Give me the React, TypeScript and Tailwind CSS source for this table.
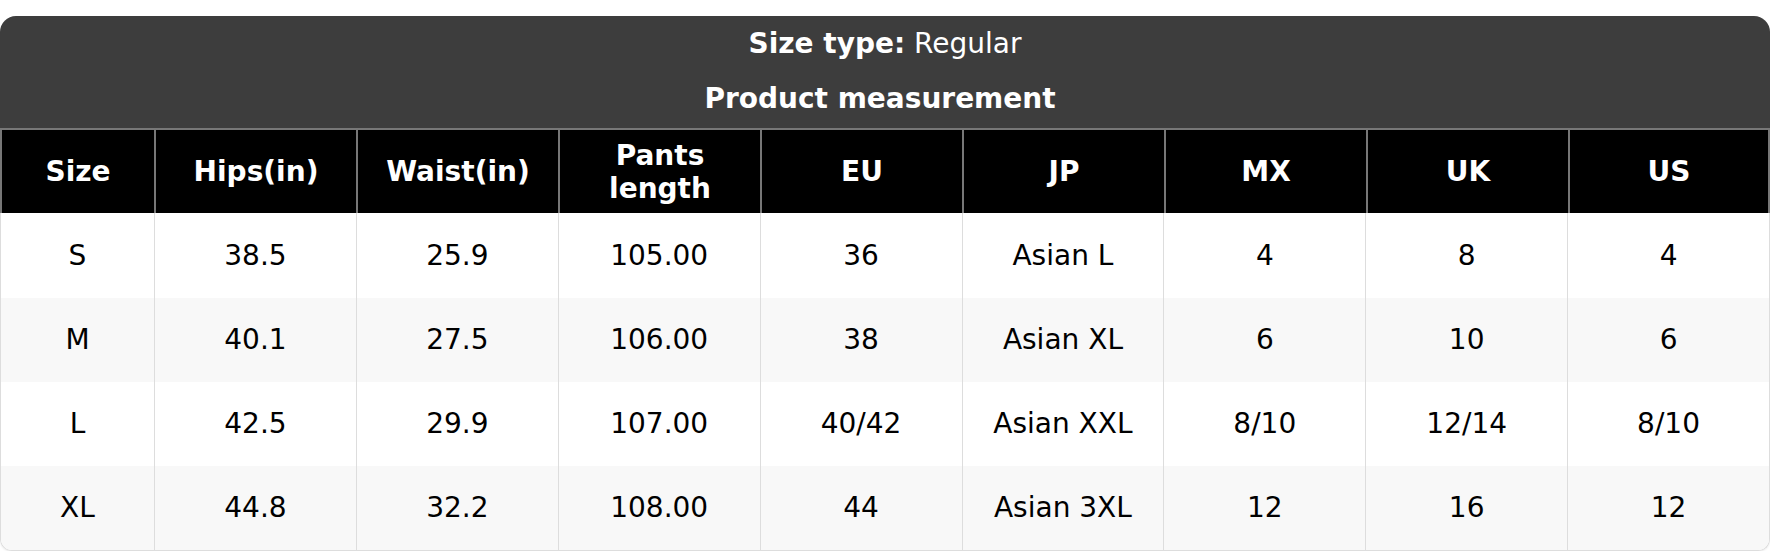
import React from "react";

const headers = ["Size", "Hips(in)", "Waist(in)", "Pants length", "EU", "JP", "MX", "UK", "US"];
const rows = [
  ["S", "38.5", "25.9", "105.00", "36", "Asian L", "4", "8", "4"],
  ["M", "40.1", "27.5", "106.00", "38", "Asian XL", "6", "10", "6"],
  ["L", "42.5", "29.9", "107.00", "40/42", "Asian XXL", "8/10", "12/14", "8/10"],
  ["XL", "44.8", "32.2", "108.00", "44", "Asian 3XL", "12", "16", "12"],
];

export default function App() {
  return (
    <div
      className="bg-white pt-[16px] w-[1770px]"
      style={{ fontFamily: '"DejaVu Sans", sans-serif' }}
    >
      <div className="w-full">
        <div className="bg-[#3d3d3d] rounded-t-[16px] text-white text-[28px] flex flex-col items-center pt-[11px] pb-[13px] gap-[22px] leading-[33px]">
          <div>
            <span className="font-bold">Size type:</span> Regular
          </div>
          <div className="font-bold pr-[10px]">Product measurement</div>
        </div>
        <div className="grid grid-cols-[154px_repeat(8,minmax(0,1fr))] bg-black border-t-2 border-[#777]">
          {headers.map((h, i) => (
            <div
              key={h}
              className={`h-[83px] flex items-center justify-center text-center text-white font-bold text-[28px] leading-[33px] px-3 border-l-2 border-[#777] ${
                i === headers.length - 1 ? "border-r-2" : ""
              }`}
            >
              {h}
            </div>
          ))}
        </div>
        <div className="border-x border-b border-[#ddd] rounded-b-[12px] overflow-hidden shadow-[0_1px_2px_rgba(0,0,0,0.08)]">
          {rows.map((r, ri) => (
            <div
              key={ri}
              className={`grid grid-cols-[153px_repeat(8,minmax(0,1fr))] ${
                ri % 2 === 1 ? "bg-[#f8f8f8]" : "bg-white"
              }`}
            >
              {r.map((c, ci) => (
                <div
                  key={ci}
                  className={`${ri === 0 ? "h-[85px]" : "h-[84px]"} flex items-center justify-center text-[28px] text-black ${
                    ci > 0 ? "border-l border-[#ddd]" : ""
                  }`}
                >
                  {c}
                </div>
              ))}
            </div>
          ))}
        </div>
      </div>
    </div>
  );
}
